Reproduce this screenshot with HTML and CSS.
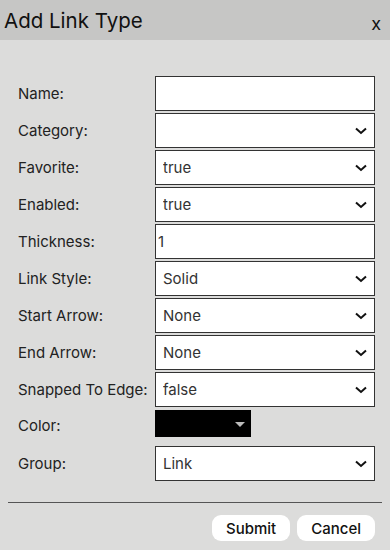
FILE: index.html
```html
<!DOCTYPE html>
<html lang="en">
<head>
<meta charset="UTF-8" />
<title>Add Link Type</title>
<link rel="stylesheet" href="styles.css">
</head>
<body>

<div class="dialog">
  <div class="dialog-title">
    <h2>Add Link Type</h2>
    <span class="close">x</span>
  </div>

  <form class="dialog-body">
    <div class="fields">
      <label>Name:</label>
      <input type="text" class="field" />

      <label>Category:</label>
      <select class="field"><option></option></select>

      <label>Favorite:</label>
      <select class="field"><option>true</option><option>false</option></select>

      <label>Enabled:</label>
      <select class="field"><option>true</option><option>false</option></select>

      <label>Thickness:</label>
      <input type="text" class="field" value="1" />

      <label>Link Style:</label>
      <select class="field"><option>Solid</option><option>Dashed</option></select>

      <label>Start Arrow:</label>
      <select class="field"><option>None</option><option>Arrow</option></select>

      <label>End Arrow:</label>
      <select class="field"><option>None</option><option>Arrow</option></select>

      <label>Snapped To Edge:</label>
      <select class="field"><option>false</option><option>true</option></select>

      <label class="color-label">Color:</label>
      <div class="color-pick"><span class="color-caret"></span></div>

      <label>Group:</label>
      <select class="field"><option>Link</option></select>
    </div>

    <hr class="divider" />

    <div class="actions">
      <button type="button">Submit</button>
      <button type="button">Cancel</button>
    </div>
  </form>
</div>

</body>
</html>
```

FILE: styles.css
```css
body {
  margin: 0;
  font-family: Inter, Roboto, sans-serif;
  background: #dcdcdb;
  color: #222;
}

.dialog {
  width: 390px;
  height: 550px;
}

.dialog-title {
  height: 40px;
  background: #c6c6c5;
  display: flex;
  justify-content: space-between;
  align-items: center;
  padding: 0 9px 0 4px;
}
.dialog-title h2 {
  margin: 0;
  font-size: 20.5px;
  font-weight: 400;
  color: #111;
}
.close {
  font-size: 18px;
  color: #111;
  margin-top: 6px;
}

.dialog-body {
  padding: 36px 8px 0 8px;
}

.fields {
  display: grid;
  grid-template-columns: 137px 220px;
  grid-auto-rows: 35px;
  row-gap: 2px;
  padding-left: 10px;
}
.fields label {
  font-size: 15px;
  align-self: center;
}

.field {
  box-sizing: border-box;
  height: 35px;
  width: 220px;
  margin: 0;
  border: 1px solid #333;
  border-radius: 0;
  background: white;
  font-family: Inter, Roboto, sans-serif;
  font-size: 15px;
  color: #333;
  padding: 0 2px;
  outline: none;
}
select.field {
  appearance: none;
  -webkit-appearance: none;
  padding: 0 7px;
  background: white url("data:image/svg+xml,%3Csvg xmlns='http://www.w3.org/2000/svg' width='12' height='8' viewBox='0 0 12 8'%3E%3Cpath d='M1 1.5 L6 6 L11 1.5' fill='none' stroke='%23111' stroke-width='2'/%3E%3C/svg%3E") no-repeat right 7px center;
}

.color-label {
  margin-top: -2px;
}
.color-pick {
  width: 96px;
  height: 27px;
  margin-top: 1px;
  background: #000;
  position: relative;
}
.color-caret {
  position: absolute;
  right: 6px;
  top: 12px;
  border-left: 5px solid transparent;
  border-right: 5px solid transparent;
  border-top: 5px solid #bbb;
}

.divider {
  border: none;
  border-top: 1px solid #555;
  margin: 21px 0 0 0;
}

.actions {
  display: flex;
  justify-content: flex-end;
  gap: 7px;
  margin-top: 12px;
  padding-right: 7px;
}
.actions button {
  height: 26px;
  padding: 0 14px;
  border: none;
  border-radius: 9px;
  background: white;
  font-family: Inter, Roboto, sans-serif;
  font-size: 15px;
  font-weight: 500;
  color: #111;
  cursor: pointer;
}
```
